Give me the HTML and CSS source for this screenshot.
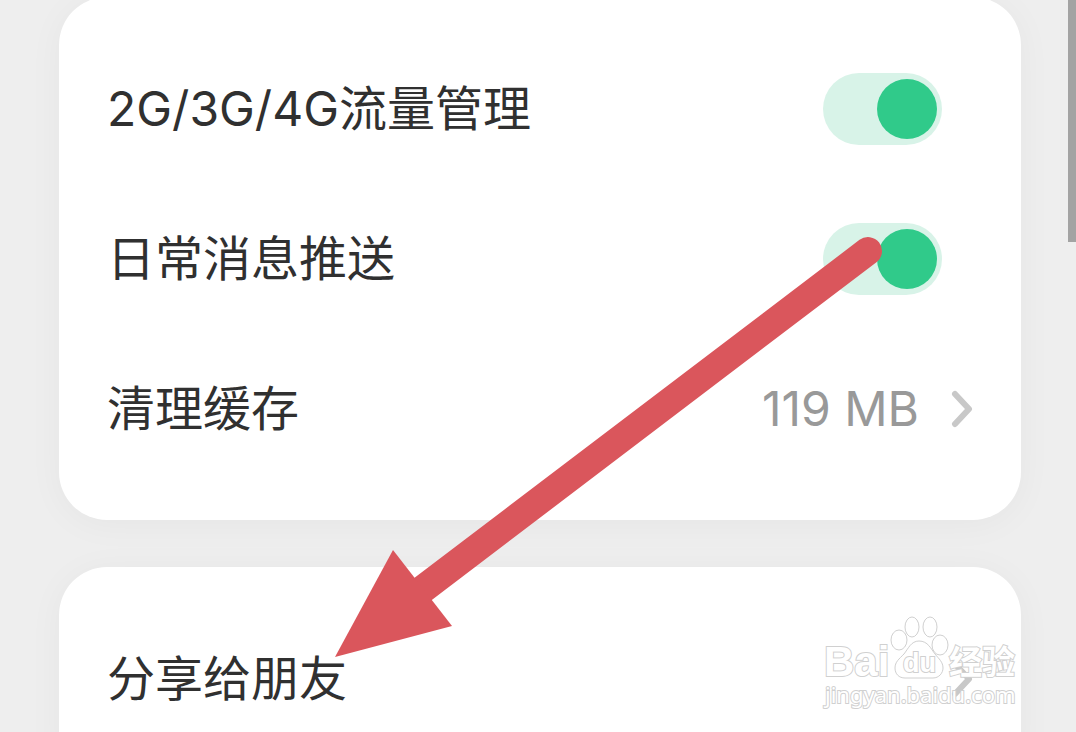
FILE: index.html
```
<!DOCTYPE html>
<html lang="zh-CN">
<head>
  <meta charset="utf-8">
  <title>设置</title>
  <link rel="stylesheet" href="styles.css">
</head>
<body>
  <main class="settings">
    <section class="card">
      <div class="row">
        <label for="traffic">2G/3G/4G流量管理</label>
        <input type="checkbox" class="switch" id="traffic" checked>
      </div>
      <div class="row">
        <label for="push">日常消息推送</label>
        <input type="checkbox" class="switch" id="push" checked>
      </div>
      <a class="row" href="#cache">
        <span>清理缓存</span>
        <span class="value">119 MB</span>
        <svg class="chevron" viewBox="0 0 22 38"><path d="M4 4L18 19L4 34"/></svg>
      </a>
    </section>
    <section class="card">
      <a class="row" href="#share">
        <span>分享给朋友</span>
        <svg class="chevron" viewBox="0 0 22 38"><path d="M4 4L18 19L4 34"/></svg>
      </a>
    </section>
  </main>

  <svg class="arrow" viewBox="0 0 560 430">
    <path class="shaft" d="M537 21L92 359"/>
    <path class="head" d="M4 427L62 320L121 396Z"/>
  </svg>

  <svg class="watermark" viewBox="0 0 200 100">
    <text class="bai" x="4" y="61">Bai</text>
    <path d="M99 26C91 26 88 34 84 39C79 44 75 47 75 53C75 59 79 63 85 63H113C119 63 123 58 123 53C123 47 119 44 115 39C111 34 108 26 99 26Z"/>
    <ellipse cx="79" cy="25" rx="8" ry="10"/>
    <ellipse cx="92" cy="12" rx="7" ry="10"/>
    <ellipse cx="110" cy="12" rx="7" ry="10"/>
    <ellipse cx="120" cy="30" rx="8" ry="10"/>
    <text class="du" x="83" y="57">du</text>
    <text class="jingyan" x="129" y="59">经验</text>
    <text class="site" x="5" y="88">jingyan.baidu.com</text>
  </svg>

  <div class="scrollbar"></div>
</body>
</html>
```
FILE: styles.css
```
body {
  margin: 0;
  height: 100vh;
  overflow: hidden;
  background-color: #eeeeee;
  font-family: Inter, "Noto Sans CJK SC", sans-serif;
  font-size: 48px;
  color: #303030;
}
.settings {
  display: flex;
  flex-direction: column;
  gap: 47px;
  margin: -3px 55px 0 59px;
}
.card {
  padding: 37px 48px 36px;
  border-radius: 48px;
  background-color: #ffffff;
  box-shadow: 0 4px 36px rgba(0, 0, 0, 0.04);
}
.row {
  display: flex;
  align-items: center;
  justify-content: space-between;
  height: 150px;
  line-height: 72px;
  color: inherit;
  text-decoration: none;
}
.value {
  margin-left: auto;
  margin-right: 32px;
  color: #999999;
}
.chevron {
  width: 22px;
  height: 38px;
  fill: none;
  stroke: #c8c8c8;
  stroke-width: 6;
  stroke-linecap: round;
  stroke-linejoin: round;
}

.switch {
  appearance: none;
  display: flex;
  align-items: center;
  justify-content: flex-end;
  box-sizing: border-box;
  width: 119px;
  height: 72px;
  margin: 0 31px 0 0;
  padding: 0 5px;
  border-radius: 36px;
  background-color: #d8f3e8;
  cursor: pointer;
}
.switch::before {
  content: "";
  width: 60px;
  height: 60px;
  border-radius: 50%;
  background-color: #30ca8a;
}
.switch:not(:checked) {
  justify-content: flex-start;
  background-color: #e5e5e5;
}

.arrow {
  position: absolute;
  left: 331px;
  top: 230px;
  width: 560px;
  height: 430px;
  pointer-events: none;
}
.shaft {
  stroke: #da565c;
  stroke-width: 28;
  stroke-linecap: round;
}
.head {
  fill: #da565c;
}

.watermark {
  position: absolute;
  right: 56px;
  top: 615px;
  width: 200px;
  height: 100px;
  fill: #ffffff;
  stroke: #d0d0d0;
  stroke-width: 1;
  pointer-events: none;
}
.watermark text {
  stroke-width: 2;
  paint-order: stroke;
}
.bai {
  font: bold 42px "Liberation Sans", sans-serif;
}
.du {
  font: bold 27px "Liberation Sans", sans-serif;
}
.jingyan {
  font: bold 33px "Noto Sans CJK SC", sans-serif;
}
.site {
  font: 22px "Noto Sans", sans-serif;
}

.scrollbar {
  position: fixed;
  top: 0;
  right: 0;
  width: 8px;
  height: 242px;
  background-color: #a3a3a3;
}
```
